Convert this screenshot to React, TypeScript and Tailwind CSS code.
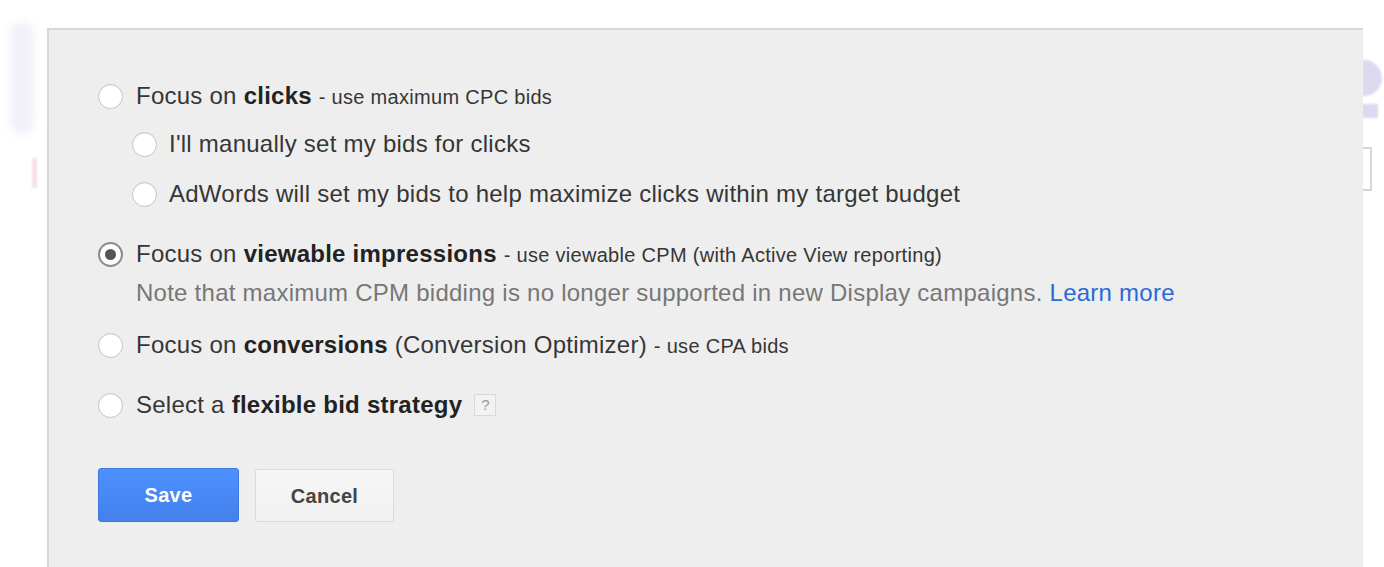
import { useState } from "react";

type Choice = "clicks" | "viewable" | "conversions" | "flexible";
type ClickMode = "manual" | "auto";

const Radio = ({ checked, onClick }: { checked: boolean; onClick: () => void }) => (
  <button
    type="button"
    onClick={onClick}
    className={
      checked
        ? "flex h-[25px] w-[25px] shrink-0 items-center justify-center rounded-full border-2 border-[#8c8c8c] bg-white"
        : "flex h-[25px] w-[25px] shrink-0 items-center justify-center rounded-full border border-[#c4c4c4] bg-white shadow-[inset_0_1px_1px_rgba(0,0,0,0.06)]"
    }
  >
    {checked && <span className="h-[11px] w-[11px] rounded-full bg-[#555]" />}
  </button>
);

const App = () => {
  const [choice, setChoice] = useState<Choice>("viewable");
  const [clickMode, setClickMode] = useState<ClickMode | null>(null);

  return (
    <div className="relative h-[567px] w-[1384px] overflow-hidden bg-white font-['Liberation_Sans',Arial,sans-serif] text-[#363636]">
      {/* page fragments peeking out behind the panel */}
      <div className="absolute left-[10px] top-[22px] h-[112px] w-[24px] rounded-full bg-[#e2ddf3] opacity-45 blur-[4px]" />
      <div className="absolute left-[32px] top-[158px] h-[30px] w-[5px] bg-[#f4d4dc] opacity-70 blur-[1px]" />
      <div className="absolute left-[1362px] top-[60px] h-[36px] w-[20px] rounded-r-full bg-[#dcd8f0] blur-[1px]" />
      <div className="absolute left-[1362px] top-[104px] h-[14px] w-[16px] bg-[#dcd8f0] blur-[1px]" />
      <div className="absolute left-[1362px] top-[147px] h-[44px] w-[10px] border-y-2 border-r-2 border-[#d6d6d6]" />

      <div className="absolute left-[47px] top-[28px] h-[560px] w-[1316px] border-l-2 border-t-2 border-[#d7d7d7] bg-[#eeeeee] pl-[49px] pt-[52px] text-[24px] leading-[28px] tracking-[0.25px]">
        <div className="flex flex-col">
          <div className="flex items-center gap-[13px]">
            <Radio checked={choice === "clicks"} onClick={() => setChoice("clicks")} />
            <p>
              Focus on <b className="text-[#222]">clicks</b>{" "}
              <span className="text-[20px] tracking-[0.3px]">- use maximum CPC bids</span>
            </p>
          </div>

          <div className="mt-[19px] flex flex-col gap-[22px] pl-[34px]">
            <div className="flex items-center gap-[12px]">
              <Radio checked={clickMode === "manual"} onClick={() => setClickMode("manual")} />
              <p>I'll manually set my bids for clicks</p>
            </div>
            <div className="flex items-center gap-[12px]">
              <Radio checked={clickMode === "auto"} onClick={() => setClickMode("auto")} />
              <p>AdWords will set my bids to help maximize clicks within my target budget</p>
            </div>
          </div>

          <div className="mt-[32px] flex items-center gap-[13px]">
            <Radio checked={choice === "viewable"} onClick={() => setChoice("viewable")} />
            <p>
              Focus on <b className="text-[#222]">viewable impressions</b>{" "}
              <span className="text-[20px] tracking-[0.3px]">
                - use viewable CPM (with Active View reporting)
              </span>
            </p>
          </div>
          <p className="mt-[10px] pl-[38px] text-[#777]">
            Note that maximum CPM bidding is no longer supported in new Display campaigns.{" "}
            <a href="#" className="text-[#2a6ad8]">
              Learn more
            </a>
          </p>

          <div className="mt-[24px] flex items-center gap-[13px]">
            <Radio checked={choice === "conversions"} onClick={() => setChoice("conversions")} />
            <p>
              Focus on <b className="text-[#222]">conversions</b> (Conversion Optimizer){" "}
              <span className="text-[20px] tracking-[0.3px]">- use CPA bids</span>
            </p>
          </div>

          <div className="mt-[31px] flex items-center gap-[13px]">
            <Radio checked={choice === "flexible"} onClick={() => setChoice("flexible")} />
            <p>
              Select a <b className="text-[#222]">flexible bid strategy</b>
            </p>
            <span className="-ml-[1px] flex h-[22px] w-[22px] items-center justify-center border border-[#d8d8d8] bg-[#f2f2f2] text-[15px] tracking-normal text-[#999]">
              ?
            </span>
          </div>

          <div className="mt-[49px] flex gap-[16px]">
            <button
              type="button"
              className="h-[54px] w-[141px] rounded-[3px] border border-[#3c78e0] bg-gradient-to-b from-[#4d90fe] to-[#4381ec] text-[20px] font-bold tracking-[0.3px] text-white"
            >
              Save
            </button>
            <button
              type="button"
              className="mt-[1px] h-[53px] w-[139px] rounded-[2px] border border-[#dcdcdc] bg-gradient-to-b from-[#f6f6f6] to-[#f1f1f1] text-[20px] font-bold tracking-[0.3px] text-[#444]"
            >
              Cancel
            </button>
          </div>
        </div>
      </div>
    </div>
  );
};

export default App;
